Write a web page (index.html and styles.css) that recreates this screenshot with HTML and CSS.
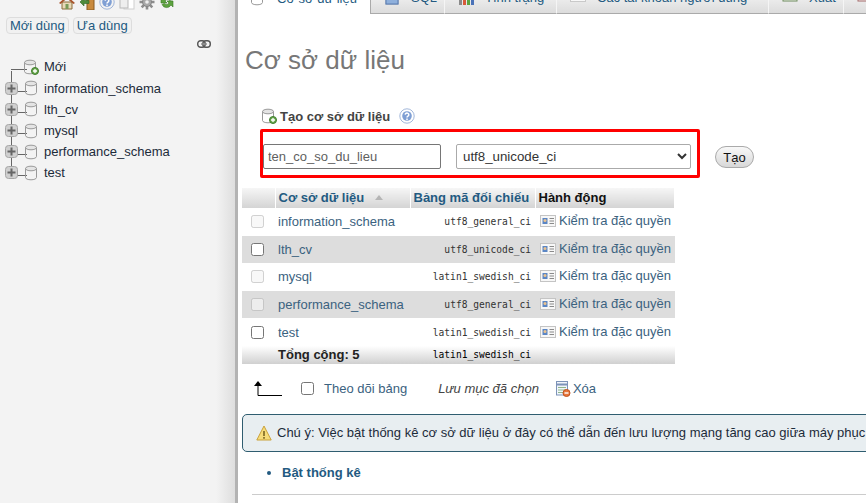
FILE: index.html
```html
<!DOCTYPE html>
<html lang="vi">
<head>
    <meta charset="UTF-8">
    <meta name="viewport" content="width=device-width, initial-scale=1.0">
    <title>Cơ sở dữ liệu</title>
    <link rel="stylesheet" href="styles.css">
</head>
<body>
    <svg class="sprites" width="0" height="0">
        <defs>
            <linearGradient id="cyl" x1="0" x2="1" y1="0" y2="0">
                <stop offset="0" stop-color="#b4b4b4"/>
                <stop offset=".45" stop-color="#f2f2f2"/>
                <stop offset="1" stop-color="#a8a8a8"/>
            </linearGradient>
            <linearGradient id="blue" x1="0" x2="0" y1="0" y2="1">
                <stop offset="0" stop-color="#a9c0e6"/>
                <stop offset="1" stop-color="#3f68b0"/>
            </linearGradient>
            <symbol id="i-db" viewBox="0 0 16 16">
                <path d="M2.500 3.500v9c0 1.300 2.400 2.300 5.500 2.300s5.500-1 5.500-2.300v-9z" fill="url(#cyl)" stroke="#999"/>
                <ellipse cx="8" cy="3.500" rx="5.500" ry="2.300" fill="#e4e4e4" stroke="#999"/>
            </symbol>
            <symbol id="i-dbnew" viewBox="0 0 16 16">
                <path d="M1.500 3.500v9c0 1.300 2.400 2.300 5.500 2.300s5.500-1 5.500-2.300v-9z" fill="url(#cyl)" stroke="#999"/>
                <ellipse cx="7" cy="3.500" rx="5.500" ry="2.300" fill="#e4e4e4" stroke="#999"/>
                <circle cx="12" cy="12" r="3.500" fill="#6aa84f" stroke="#3f7d2c"/>
                <path d="M10 12h4M12 10v4" stroke="#fff" stroke-width="1.300"/>
            </symbol>
            <symbol id="i-plus" viewBox="0 0 13 13">
                <rect x=".5" y=".5" width="12" height="12" rx="3" fill="#cfcfcf" stroke="#a6a6a6"/>
                <path d="M2.500 6.500h8M6.500 2.500v8" stroke="#666" stroke-width="2"/>
            </symbol>
            <symbol id="i-home" viewBox="0 0 16 16">
                <path d="M3 8v7h10V8z" fill="#e8d9b8" stroke="#8a6d3b"/>
                <path d="M0 9l8-7 8 7-1.500 1L8 4.500 1.500 10z" fill="#a9552d"/>
                <rect x="6.500" y="10" width="3" height="5" fill="#7a9b58"/>
            </symbol>
            <symbol id="i-door" viewBox="0 0 16 16">
                <rect x="8" y="0" width="7" height="16" fill="#c98a3d" stroke="#8a5a20"/>
                <path d="M1 8l4-4v2.500h5v3H5V12z" fill="#4e8a3c" stroke="#2f6425" stroke-width=".6"/>
            </symbol>
            <symbol id="i-help" viewBox="0 0 16 16">
                <circle cx="8" cy="8" r="7.200" fill="url(#blue)" stroke="#8aa4d0" stroke-width=".8"/>
                <circle cx="8" cy="8" r="4.800" fill="#7f9fd4"/>
                <path d="M6.200 6.600a1.800 1.600 0 1 1 2.700 1.500c-.6.400-.9.700-.9 1.400M8 10.500v1.500" fill="none" stroke="#fff" stroke-width="1.500"/>
            </symbol>
            <symbol id="i-doc" viewBox="0 0 16 16">
                <rect x="5" y="0" width="10" height="15" fill="#fff" stroke="#cfcfcf"/>
                <rect x="1" y="1" width="8" height="13" fill="#eee" stroke="#b9b9b9"/>
            </symbol>
            <symbol id="i-gear" viewBox="0 0 16 16">
                <path d="M8 .5v3M8 12.500v3M.5 8h3M12.500 8h3M2.700 2.700l2.100 2.100M11.200 11.200l2.100 2.100M2.700 13.300l2.100-2.100M11.200 4.800l2.100-2.100" stroke="#8c8c8c" stroke-width="2.600"/>
                <circle cx="8" cy="8" r="4.500" fill="#a8a8a8" stroke="#808080"/>
                <circle cx="8" cy="8" r="1.800" fill="#eee"/>
            </symbol>
            <symbol id="i-reload" viewBox="0 0 16 16">
                <path d="M13 5.500A5 5 0 0 0 4 5L2 3v6h6L6 7a2.800 2.800 0 0 1 4.600-.4z" fill="#5da33f" stroke="#3a7a25" stroke-width=".6"/>
                <path d="M3 10.500A5 5 0 0 0 12 11l2 2V7H8l2 2a2.800 2.800 0 0 1-4.600.4z" fill="#5da33f" stroke="#3a7a25" stroke-width=".6"/>
            </symbol>
            <symbol id="i-link" viewBox="0 0 14 8">
                <rect x=".7" y=".7" width="7.500" height="6.600" rx="3" fill="none" stroke="#555" stroke-width="1.400"/>
                <rect x="5.800" y=".7" width="7.500" height="6.600" rx="3" fill="none" stroke="#555" stroke-width="1.400"/>
                <path d="M4 4h6" stroke="#888" stroke-width="1.400"/>
            </symbol>
            <symbol id="i-card" viewBox="0 0 16 12">
                <rect x=".5" y=".5" width="15" height="11" fill="#f7f7f7" stroke="#c4c4c4"/>
                <rect x="2.500" y="3" width="5" height="6" fill="#5b86c4"/>
                <circle cx="5" cy="5.500" r="1.500" fill="#eac28f"/>
                <path d="M9.500 3.500h4.500M9.500 6h4.500M9.500 8.500h4.500" stroke="#8a8a8a"/>
            </symbol>
            <symbol id="i-sql" viewBox="0 0 16 16">
                <rect x="2" y="1" width="12" height="13" fill="#f4f6fa" stroke="#7d93b8"/>
                <rect x="2" y="9" width="12" height="5" fill="#8fb0dc" stroke="#5a7db0"/>
            </symbol>
            <symbol id="i-chart" viewBox="0 0 16 16">
                <rect x="1" y="5" width="3" height="10" fill="#8a8a8a"/>
                <rect x="5" y="2" width="3" height="13" fill="#d85a3a"/>
                <rect x="9" y="0" width="3" height="15" fill="#5da33f"/>
                <rect x="13" y="3" width="3" height="12" fill="#4a72b8"/>
            </symbol>
            <symbol id="i-users" viewBox="0 0 16 16">
                <rect x=".5" y=".5" width="15" height="11" fill="#f8f8f8" stroke="#c9c9c9"/>
            </symbol>
            <symbol id="i-export" viewBox="0 0 16 16">
                <rect x="1" y="0" width="14" height="11" fill="#f2f6ee" stroke="#6d8a5c"/>
                <path d="M3 3h10M3 6h10" stroke="#5da33f" stroke-width="2"/>
            </symbol>
            <symbol id="i-import" viewBox="0 0 16 16">
                <rect x="1" y="0" width="14" height="11" fill="#f6eeee" stroke="#a46a6a"/>
                <path d="M3 3h10M3 6h10" stroke="#d85a3a" stroke-width="2"/>
            </symbol>
            <symbol id="i-drop" viewBox="0 0 16 16">
                <rect x="1.500" y=".5" width="11" height="13.500" fill="#f1f5fb" stroke="#7d93b8"/>
                <path d="M1.500 3.500h11" stroke="#7d93b8" stroke-width="2"/>
                <path d="M3 6.500h8M3 9h8M3 11.500h6" stroke="#8fb78a"/>
                <circle cx="11.500" cy="12" r="3.500" fill="#e8763a" stroke="#c0531f"/>
                <path d="M9.500 12h4" stroke="#fff" stroke-width="1.400"/>
            </symbol>
            <symbol id="i-warn" viewBox="0 0 16 16">
                <path d="M8 1L.8 15h14.400z" fill="#f6dc7a" stroke="#c9a13b"/>
                <path d="M8 6v5M8 12v1.800" stroke="#7a6420" stroke-width="1.600"/>
            </symbol>
        </defs>
    </svg>

    <aside class="sidebar">
        <div class="nav-icons">
            <svg class="icon"><use href="#i-home"/></svg>
            <svg class="icon"><use href="#i-door"/></svg>
            <svg class="icon"><use href="#i-help"/></svg>
            <svg class="icon"><use href="#i-doc"/></svg>
            <svg class="icon"><use href="#i-gear"/></svg>
            <svg class="icon"><use href="#i-reload"/></svg>
        </div>
        <div class="recent-tabs">
            <button class="recent-btn">Mới dùng</button>
            <button class="recent-btn">Ưa dùng</button>
        </div>
        <div class="link-row"><svg class="link-icon"><use href="#i-link"/></svg></div>
        <ul class="tree">
            <li class="tree-row tree-first"><span class="toggle"></span><svg class="icon tree-db"><use href="#i-dbnew"/></svg><span>Mới</span></li>
            <li class="tree-row"><svg class="toggle"><use href="#i-plus"/></svg><svg class="icon tree-db"><use href="#i-db"/></svg><span>information_schema</span></li>
            <li class="tree-row"><svg class="toggle"><use href="#i-plus"/></svg><svg class="icon tree-db"><use href="#i-db"/></svg><span>lth_cv</span></li>
            <li class="tree-row"><svg class="toggle"><use href="#i-plus"/></svg><svg class="icon tree-db"><use href="#i-db"/></svg><span>mysql</span></li>
            <li class="tree-row"><svg class="toggle"><use href="#i-plus"/></svg><svg class="icon tree-db"><use href="#i-db"/></svg><span>performance_schema</span></li>
            <li class="tree-row tree-last"><svg class="toggle"><use href="#i-plus"/></svg><svg class="icon tree-db"><use href="#i-db"/></svg><span>test</span></li>
        </ul>
    </aside>
    <div class="resizer"></div>

    <main class="content">
        <nav class="tabs">
            <a class="tab tab-active tab-db"><svg class="icon"><use href="#i-db"/></svg>Cơ sở dữ liệu</a>
            <a class="tab tab-sql"><svg class="icon"><use href="#i-sql"/></svg>SQL</a>
            <a class="tab tab-status"><svg class="icon"><use href="#i-chart"/></svg>Tình trạng</a>
            <a class="tab tab-users"><svg class="icon"><use href="#i-users"/></svg>Các tài khoản người dùng</a>
            <a class="tab tab-export"><svg class="icon"><use href="#i-export"/></svg>Xuất</a>
            <a class="tab tab-import"><svg class="icon"><use href="#i-import"/></svg>Nhập</a>
        </nav>

        <h1 class="page-title">Cơ sở dữ liệu</h1>

        <div class="create-title">
            <svg class="icon"><use href="#i-dbnew"/></svg>
            <strong>Tạo cơ sở dữ liệu</strong>
            <svg class="icon help-icon"><use href="#i-help"/></svg>
        </div>

        <form class="create-form">
            <div class="highlight">
                <input class="db-name" type="text" placeholder="ten_co_so_du_lieu">
                <select class="db-collation">
                    <option>utf8_unicode_ci</option>
                </select>
            </div>
            <button class="create-btn" type="button">Tạo</button>
        </form>

        <table class="db-table">
            <thead>
                <tr>
                    <th class="col-check"></th>
                    <th class="col-name">Cơ sở dữ liệu <span class="sort-arrow"></span></th>
                    <th class="col-coll">Bảng mã đối chiếu</th>
                    <th class="col-action">Hành động</th>
                </tr>
            </thead>
            <tbody>
                <tr>
                    <td class="col-check"><input type="checkbox" disabled></td>
                    <td>information_schema</td>
                    <td class="coll">utf8_general_ci</td>
                    <td class="action"><svg class="card"><use href="#i-card"/></svg>Kiểm tra đặc quyền</td>
                </tr>
                <tr class="even">
                    <td class="col-check"><input type="checkbox"></td>
                    <td>lth_cv</td>
                    <td class="coll">utf8_unicode_ci</td>
                    <td class="action"><svg class="card"><use href="#i-card"/></svg>Kiểm tra đặc quyền</td>
                </tr>
                <tr>
                    <td class="col-check"><input type="checkbox" disabled></td>
                    <td>mysql</td>
                    <td class="coll">latin1_swedish_ci</td>
                    <td class="action"><svg class="card"><use href="#i-card"/></svg>Kiểm tra đặc quyền</td>
                </tr>
                <tr class="even">
                    <td class="col-check"><input type="checkbox" disabled></td>
                    <td>performance_schema</td>
                    <td class="coll">utf8_general_ci</td>
                    <td class="action"><svg class="card"><use href="#i-card"/></svg>Kiểm tra đặc quyền</td>
                </tr>
                <tr>
                    <td class="col-check"><input type="checkbox"></td>
                    <td>test</td>
                    <td class="coll">latin1_swedish_ci</td>
                    <td class="action"><svg class="card"><use href="#i-card"/></svg>Kiểm tra đặc quyền</td>
                </tr>
            </tbody>
            <tfoot>
                <tr>
                    <th class="col-check"></th>
                    <th class="col-name">Tổng cộng: 5</th>
                    <th class="coll">latin1_swedish_ci</th>
                    <th></th>
                </tr>
            </tfoot>
        </table>

        <div class="bulk-row">
            <svg class="bulk-arrow" viewBox="0 0 28 15"><path d="M0 5l4-5 4 5z" fill="#000"/><path d="M4 4v10.500h24" fill="none" stroke="#000"/></svg>
            <label class="check-all"><input type="checkbox">Theo dõi bảng</label>
            <em class="bulk-label">Lưu mục đã chọn</em>
            <a class="bulk-drop"><svg class="icon"><use href="#i-drop"/></svg>Xóa</a>
        </div>

        <div class="notice">
            <svg class="icon"><use href="#i-warn"/></svg>
            <span>Chú ý: Việc bật thống kê cơ sở dữ liệu ở đây có thể dẫn đến lưu lượng mạng tăng cao giữa máy phục vụ Web và máy chủ MySQL.</span>
        </div>

        <ul class="stat-list">
            <li>Bật thống kê</li>
        </ul>
        <hr class="rule">
    </main>
</body>
</html>
```

FILE: styles.css
```css
* {
    box-sizing: border-box;
}

html, body {
    height: 100%;
}

body {
    margin: 0;
    display: flex;
    overflow: hidden;
    font-family: "Liberation Sans", Arial, sans-serif;
    font-size: 13px;
    color: #444;
    background: #fff;
}

.sprites {
    display: none;
}

.icon {
    width: 16px;
    height: 16px;
    flex: none;
}

/* left panel */
.sidebar {
    width: 235px;
    flex: none;
    background: linear-gradient(to right, #f3f3f3 92%, #dedede);
    color: #1c2b3a;
}

.nav-icons {
    display: flex;
    justify-content: flex-start;
    gap: 4px;
    margin-top: -6px;
    padding-left: 59px;
}

.recent-tabs {
    display: flex;
    gap: 4px;
    margin-top: 7px;
    padding-left: 6px;
}

.recent-btn {
    height: 17px;
    padding: 0 3px;
    border: 1px solid #ddd;
    border-radius: 4px;
    background: #f1f1f1;
    font: 13px "Liberation Sans", Arial, sans-serif;
    line-height: 14px;
    color: #235a81;
}

.link-row {
    display: flex;
    padding: 6px 0 0 197px;
}

.link-icon {
    width: 14px;
    height: 8px;
}

.tree {
    list-style: none;
    margin: 8.4px 0 0;
    padding: 0;
}

.tree-row {
    display: flex;
    align-items: center;
    height: 21.2px;
    padding-left: 5px;
    background:
        linear-gradient(#666, #666) 11px 0 / 1px 100% no-repeat,
        linear-gradient(#666, #666) 11px calc(50% + 3px) / 16px 1px no-repeat;
}

.tree-first {
    background:
        linear-gradient(#666, #666) 11px 100% / 1px 7px no-repeat,
        linear-gradient(#666, #666) 11px calc(50% + 3px) / 16px 1px no-repeat;
}

.tree-last {
    background:
        linear-gradient(#666, #666) 11px 0 / 1px 14px no-repeat,
        linear-gradient(#666, #666) 11px calc(50% + 3px) / 16px 1px no-repeat;
}

.toggle {
    width: 13px;
    height: 13px;
    flex: none;
}

.tree-db {
    margin: 0 5px 0 5px;
}

/* main area */
.resizer {
    width: 3px;
    flex: none;
    background: #b3b3b3;
}

.content {
    flex: 1;
    min-width: 0;
    overflow: hidden;
    padding-left: 4px;
}

.tabs {
    display: flex;
    height: 24px;
    margin: -10px 0 0 -1px;
    white-space: nowrap;
}

.tab {
    display: flex;
    align-items: center;
    flex: none;
    height: 24px;
    padding: 0 0 8px 13px;
    border: 1px solid #f5f5f5;
    border-width: 0 1px 1px 0;
    border-bottom-color: #aaa;
    background: linear-gradient(#f6f6f6, #dcdcdc);
    color: #235a81;
    font-size: 13px;
}

.tab .icon {
    margin-right: 11px;
}

.tab-active {
    background: #fff;
    border-right-color: #aaa;
    border-bottom: 0;
}

.tab-db { width: 130px; padding-left: 8px; }
.tab-db .icon { margin-right: 12px; }
.tab-sql { width: 74px; }
.tab-status { width: 112px; }
.tab-users { width: 212px; }
.tab-export { width: 75px; }
.tab-import { width: 75px; }

.page-title {
    margin: 31px 0 0 3px;
    font-size: 26px;
    font-weight: normal;
    line-height: 30px;
    color: #777;
}

.create-title {
    display: flex;
    align-items: center;
    height: 16px;
    margin: 33px 0 0 19px;
    gap: 3px;
}

.create-title strong {
    color: #444;
}

.help-icon {
    margin-left: 6px;
}

.create-form {
    display: flex;
    align-items: center;
    margin: 5px 0 0 18px;
}

.highlight {
    display: flex;
    align-items: center;
    gap: 15px;
    width: 440px;
    height: 49px;
    padding: 5px 6px 0 0;
    border: 3px solid #f00;
    border-radius: 2px;
}

.db-name {
    width: 178px;
    height: 25px;
    padding: 0 4px;
    border: 1px solid #767676;
    border-radius: 2px;
    font: 13px "Liberation Sans", Arial, sans-serif;
}

.db-name::placeholder {
    color: #5f5f5f;
}

.db-collation {
    width: 235px;
    height: 25px;
    padding-left: 2px;
    border: 1px solid #aaa;
    border-radius: 2px;
    background: #fff;
    font: 13.3px "Liberation Sans", Arial, sans-serif;
    color: #333;
}

.create-btn {
    width: 39px;
    height: 22px;
    margin: 7px 0 0 15px;
    padding: 0;
    border: 1px solid #aaa;
    border-radius: 11px;
    background: linear-gradient(#f8f8f8, #d8d8d8);
    font: 13px "Liberation Sans", Arial, sans-serif;
    color: #111;
}

/* database list */
.db-table {
    width: 433px;
    margin: 10px 0 0;
    border-collapse: collapse;
    table-layout: fixed;
}

.db-table td,
.db-table th {
    padding: 0 3px;
    text-align: left;
    white-space: nowrap;
}

.db-table thead th {
    height: 20px;
    padding-bottom: 2px;
    border-right: 1px solid #fff;
    background: linear-gradient(#f6f6f6, #d4d4d4);
    color: #235a81;
    font-size: 13px;
}

.db-table .col-check {
    width: 33px;
    padding: 0 0 0 9px;
}

.db-table thead .col-name {
    width: 135px;
}

.db-table thead .col-coll {
    width: 125px;
}

.db-table thead .col-action {
    color: #111;
}

.sort-arrow {
    display: inline-block;
    margin: 0 0 2px 7px;
    border: 4px solid transparent;
    border-top: 0;
    border-bottom: 5px solid #b5b5b5;
}

.db-table tbody td {
    height: 27.6px;
    color: #3b6280;
}

.db-table tbody tr.even td {
    background: #ddd;
}

.db-table input {
    display: block;
    margin: 0;
}

.db-table .coll {
    padding-right: 4px;
    text-align: right;
    font-family: "DejaVu Sans Mono", monospace;
    font-size: 9.6px;
    color: #333;
    font-weight: normal;
}

.db-table .action {
    padding: 0 0 2px 5px;
}

.card {
    width: 16px;
    height: 12px;
    margin-right: 3px;
    vertical-align: -2px;
}

.db-table tfoot th {
    height: 18px;
    background: linear-gradient(#fff, #d0d0d0);
    color: #222;
}

.db-table tfoot .coll {
    color: #000;
}

/* under the table */
.bulk-row {
    display: flex;
    align-items: center;
    height: 16px;
    margin: 17px 0 0 12px;
    color: #3b6280;
}

.bulk-arrow {
    width: 28px;
    height: 15px;
    flex: none;
}

.check-all {
    display: flex;
    align-items: center;
    margin-left: 19px;
}

.check-all input {
    margin: 0 10px 0 0;
}

.bulk-label {
    margin-left: 31px;
    color: #444;
}

.bulk-drop {
    display: flex;
    align-items: center;
    gap: 2px;
    margin-left: 16px;
}

.notice {
    display: flex;
    align-items: center;
    gap: 5px;
    width: 800px;
    height: 38px;
    margin: 17px 0 0;
    padding-left: 13px;
    border: 1px solid #2f5d70;
    border-radius: 5px;
    background: #e8eef1;
    white-space: nowrap;
    color: #1c2b3a;
}

.stat-list {
    margin: 13px 0 0;
    padding-left: 40px;
    font-weight: bold;
    color: #235a81;
}

.stat-list li {
    line-height: 16px;
}

.rule {
    width: 800px;
    margin: 13px 0 0 10px;
    border: 0;
    border-top: 1px solid #ccc;
}
```
